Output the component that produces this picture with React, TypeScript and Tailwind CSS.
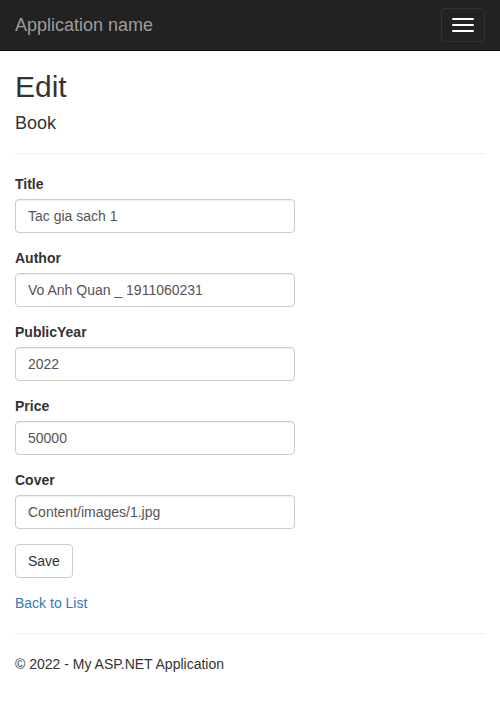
import React from 'react';

const fields = [
  { label: 'Title', value: 'Tac gia sach 1' },
  { label: 'Author', value: 'Vo Anh Quan _ 1911060231' },
  { label: 'PublicYear', value: '2022' },
  { label: 'Price', value: '50000' },
  { label: 'Cover', value: 'Content/images/1.jpg' },
];

export default function App() {
  return (
    <div className="min-h-[704px] bg-white text-[14px] leading-[20px] text-[#333] font-['Liberation_Sans',Arial,sans-serif]">
      {/* Navbar */}
      <div className="flex h-[51px] items-start justify-between border-b border-[#080808] bg-[#222]">
        <a className="px-[15px] py-[15px] text-[18px] leading-[20px] text-[#9d9d9d]">Application name</a>
        <button className="mr-[15px] mt-[8px] flex flex-col gap-[4px] rounded-[4px] border border-[#333] px-[10px] py-[9px]">
          <span className="block h-[2px] w-[22px] rounded-[1px] bg-white" />
          <span className="block h-[2px] w-[22px] rounded-[1px] bg-white" />
          <span className="block h-[2px] w-[22px] rounded-[1px] bg-white" />
        </button>
      </div>

      {/* Body */}
      <div className="px-[15px]">
        <h2 className="mt-[19px] mb-[10px] text-[30px] font-medium leading-[33px]">Edit</h2>

        <form>
          <h4 className="mt-[10px] mb-[10px] text-[18px] font-medium leading-[20px]">Book</h4>
          <hr className="my-[20px] border-0 border-t border-[#eee]" />

          {fields.map((f) => (
            <div key={f.label} className="mb-[15px]">
              <label className="mb-[5px] block font-bold">{f.label}</label>
              <input
                type="text"
                defaultValue={f.value}
                className="block h-[34px] w-full max-w-[280px] rounded-[4px] border border-[#ccc] px-[12px] py-[6px] text-[14px] text-[#555] shadow-[inset_0_1px_1px_rgba(0,0,0,0.075)] outline-none"
              />
            </div>
          ))}

          <div className="mb-[15px]">
            <button
              type="button"
              className="h-[34px] rounded-[4px] border border-[#ccc] bg-white px-[12px] text-[14px] text-[#333]"
            >
              Save
            </button>
          </div>
        </form>

        <div>
          <a className="text-[#337ab7]">Back to List</a>
        </div>

        <hr className="my-[20px] border-0 border-t border-[#eee]" />
        <footer>
          <p>© 2022 - My ASP.NET Application</p>
        </footer>
      </div>
    </div>
  );
}
